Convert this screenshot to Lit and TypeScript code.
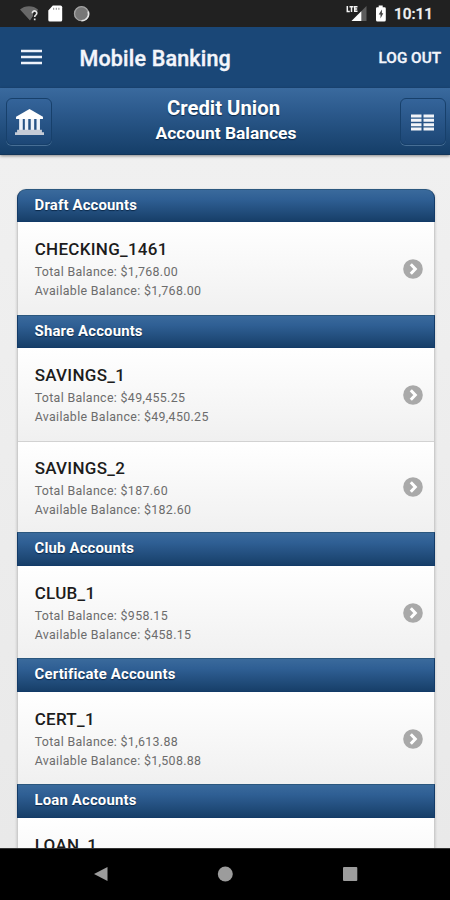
import { LitElement, html, css, svg, nothing } from "lit";
import { customElement, property } from "lit/decorators.js";

interface Account { name: string; total?: string; available?: string; }
interface Group { title: string; accounts: Account[]; }

const GROUPS: Group[] = [
  { title: "Draft Accounts", accounts: [{ name: "CHECKING_1461", total: "$1,768.00", available: "$1,768.00" }] },
  {
    title: "Share Accounts",
    accounts: [
      { name: "SAVINGS_1", total: "$49,455.25", available: "$49,450.25" },
      { name: "SAVINGS_2", total: "$187.60", available: "$182.60" },
    ],
  },
  { title: "Club Accounts", accounts: [{ name: "CLUB_1", total: "$958.15", available: "$458.15" }] },
  { title: "Certificate Accounts", accounts: [{ name: "CERT_1", total: "$1,613.88", available: "$1,508.88" }] },
  { title: "Loan Accounts", accounts: [{ name: "LOAN_1" }] },
];

@customElement("status-bar")
class StatusBar extends LitElement {
  static styles = css`
    :host { display: flex; align-items: center; justify-content: space-between; height: 27px; background: #212121; color: #f2f2f2; }
    svg { display: block; }
    .right { display: flex; align-items: center; }
    .time { font: 500 15.4px/27px Roboto, sans-serif; -webkit-text-stroke: 0.3px; width: 56px; padding-top: 1px; }
  `;
  render() {
    return html`
      <svg width="100" height="27" viewBox="0 0 100 27">
        <path d="M20 9.6C24.5 5 33.500 5 38 9.600L37 12H33V16L30 20.500Z" fill="#686868" />
        <path d="M32.400 13.200a2.200 2.200 0 1 1 3.500 1.700q-1.200 .8-1.200 2.100M34.700 18.500v1.800" fill="none" stroke="#e6e6e6" stroke-width="1.700" />
        <path d="M52.800 5.500H60.500Q62.200 5.500 62.200 7.200V20Q62.200 21.500 60.700 21.500H49.800Q48.300 21.500 48.300 20V10.500Z" fill="#fff" />
        <path d="M53.700 7.800v2M56.300 7.800v2M58.900 7.800v2" stroke="#888" stroke-width="1" />
        <circle cx="81.500" cy="13.700" r="7.300" fill="#777" />
        <circle cx="81.500" cy="13.700" r="7" fill="none" stroke="#a2a2a2" stroke-width="1.300" />
        <path d="M88.300 11.500A7 7 0 0 1 81.500 20.700" fill="none" stroke="#e4e4e4" stroke-width="1.600" />
      </svg>
      <div class="right">
        <svg width="49" height="27" viewBox="345 0 49 27">
          <path d="M366.500 6V21H351.500Z" fill="#5c5c5c" />
          <path d="M361.300 11.200V21H351.500Z" fill="#fff" />
          <path d="M347.300 6v5.500h2.500M349.500 6.700h4M351.500 6.700v5.300M357.500 6.700h-2.800v4.600h2.800M354.700 9h2.500" fill="none" stroke="#f4f4f4" stroke-width="1.500" />
          <path d="M378.700 5.500h4V7.200H384.500Q385.800 7.200 385.800 8.500V20Q385.800 21.500 384.300 21.500H377.500Q376 21.500 376 20V8.500Q376 7.200 377.300 7.200H378.700Z" fill="#fff" />
          <path d="M381.900 9.500L378.700 14.500H380.500V18.500L383.300 13.200H381.900Z" fill="#444" />
        </svg>
        <div class="time">10:11</div>
      </div>
    `;
  }
}

@customElement("account-row")
class AccountRow extends LitElement {
  @property({ attribute: false }) account!: Account;
  static styles = css`
    :host { display: flex; align-items: center; justify-content: space-between; box-sizing: border-box; height: 92.2px; padding: 0 11.300px 0 16.700px; background: linear-gradient(#fff, #f0f0f0); color: #6c6c6c; }
    .name { font: 500 17px/20px Roboto, sans-serif; letter-spacing: 0.28px; color: #1c1c1c; margin-bottom: 3px; }
    .line { font: 400 12.4px/19px Roboto, sans-serif; letter-spacing: 0.33px; white-space: nowrap; }
    .text { align-self: flex-start; padding-top: 17px; }
    svg { display: block; margin-top: 1.500px; }
  `;
  render() {
    const a = this.account;
    return html`
      <div class="text">
        <div class="name">${a.name}</div>
        ${a.total ? html`<div class="line">Total Balance: ${a.total}</div>` : nothing}
        ${a.available ? html`<div class="line">Available Balance: ${a.available}</div>` : nothing}
      </div>
      <svg width="20" height="20" viewBox="0 0 20 20">
        <circle cx="10" cy="10" r="9.800" fill="#a9a9a9" />
        <path d="M7.800 5.300L12.300 10L7.800 14.700" fill="none" stroke="#fff" stroke-width="3" />
      </svg>
    `;
  }
}

const bank = svg`
  <path d="M14 0L27 7.500V9.500H1V7.500Z" />
  <path d="M4 9.500h3.500v11H4zM9.500 9.500h3.300v11h-3.300zM15.200 9.500h3.300v11h-3.300zM20.800 9.500h3.300v11h-3.300z" fill="#eef3fa" />
  <path d="M2 20H26V22.500H28V25H0V22.500H2Z" fill="#c5cbd6" />
`;

@customElement("app-root")
class AppRoot extends LitElement {
  static styles = css`
    :host { display: flex; flex-direction: column; width: 450px; height: 900px; overflow: hidden; background: #eee; font-family: Roboto, sans-serif; }
    svg { display: block; }
    .appbar { flex: none; display: flex; align-items: center; height: 61px; box-sizing: border-box; padding: 0 9px 0 20.500px; background: #1a4777; color: #f3f5fb; }
    .menu { margin-bottom: 1.500px; }
    .title { flex: 1; margin-left: 38px; font: 500 21.500px/28px Roboto, sans-serif; letter-spacing: 0.18px; -webkit-text-stroke: 0.4px; padding-top: 3px; }
    .logout { font: 500 15.300px/20px Roboto, sans-serif; -webkit-text-stroke: 0.35px; padding-top: 1px; }
    .header { flex: none; display: flex; align-items: center; justify-content: space-between; height: 67px; box-sizing: border-box; padding: 0 4px 0 6px; background: linear-gradient(#3a6a9e, #2c5a8d 35%, #153e68); border-bottom: 1px solid #123559; box-shadow: 0 1px 3px rgba(0, 0, 0, 0.45); color: #fff; text-shadow: 0 1px 1px #0b2848; z-index: 1; }
    .btn { width: 46px; height: 47px; box-sizing: border-box; border: 1px solid #17406b; border-radius: 6px; box-shadow: 0 1px 0 rgba(140, 175, 205, 0.4); display: flex; align-items: center; justify-content: center; background: linear-gradient(#34649a, #1d4776); margin-top: 1px; }
    .btn svg { margin-top: 1px; }
    .heading { display: flex; flex-direction: column; align-items: center; }
    .h1 { font: 700 20.300px/24px Roboto, sans-serif; margin-right: 5px; }
    .h2 { font: 700 17.400px/25px Roboto, sans-serif; padding-top: 1px; }
    .content { flex: 1; min-height: 0; overflow: hidden; padding: 33.800px 15px 0 17px; background: linear-gradient(#f0f0f0, #e9e9e9); }
    .list { border: 1px solid #ccc; border-top: 0; border-radius: 9px 9px 0 0; box-shadow: 0 1px 3px rgba(0, 0, 0, 0.2); }
    .group { height: 33.700px; box-sizing: border-box; margin: 0 -1px; padding-left: 16.600px; background: linear-gradient(#3a6a9c, #2f5f94 30%, #173f69); border: 1px solid #133b68; border-top-color: #2b577e; color: #fff; font: 700 14.900px/31.200px Roboto, sans-serif; letter-spacing: 0.16px; text-shadow: 0 1px 1px #0b2848; }
    .group.first { border-radius: 9px 9px 0 0; }
    .split { height: 91.900px; background: linear-gradient(#d2d2d2 1px, #fff 1px, #f0f0f0); }
    .nav { flex: none; display: flex; align-items: center; justify-content: center; height: 52px; box-sizing: border-box; border-top: 1px solid #333; background: #000; }
  `;
  render() {
    return html`
      <status-bar></status-bar>
      <div class="appbar">
        <svg class="menu" width="21" height="16" viewBox="0 0 21 16"><path d="M0 2h21M0 8h21M0 14h21" stroke="#eef2fa" stroke-width="2.300" /></svg>
        <div class="title">Mobile Banking</div>
        <div class="logout">LOG OUT</div>
      </div>
      <div class="header">
        <div class="btn"><svg width="29" height="26" viewBox="0 0 28 25" fill="#fff">${bank}</svg></div>
        <div class="heading"><div class="h1">Credit Union</div><div class="h2">Account Balances</div></div>
        <div class="btn">
          <svg width="23" height="17" viewBox="0 0 23 17">
            <path d="M0 2h10.500M12.500 2H23M0 6.200h10.500M12.500 6.200H23M0 10.700h10.500M12.500 10.700H23M0 15h10.500M12.500 15H23" stroke="#f3f5f9" stroke-width="3" />
          </svg>
        </div>
      </div>
      <div class="content">
        <div class="list">
          ${GROUPS.map((g, i) => html`
            <div class="group ${i === 0 ? "first" : ""}">${g.title}</div>
            ${g.accounts.map((a, j) => html`<account-row class=${j > 0 ? "split" : ""} .account=${a}></account-row>`)}
          `)}
        </div>
      </div>
      <div class="nav">
        <svg width="450" height="51" viewBox="0 849 450 51" fill="#9c9c9c">
          <path d="M94 874L107.500 867V881Z" />
          <circle cx="225.300" cy="874" r="7.500" />
          <rect x="343" y="867" width="14.300" height="14" rx="1" />
        </svg>
      </div>
    `;
  }
}
